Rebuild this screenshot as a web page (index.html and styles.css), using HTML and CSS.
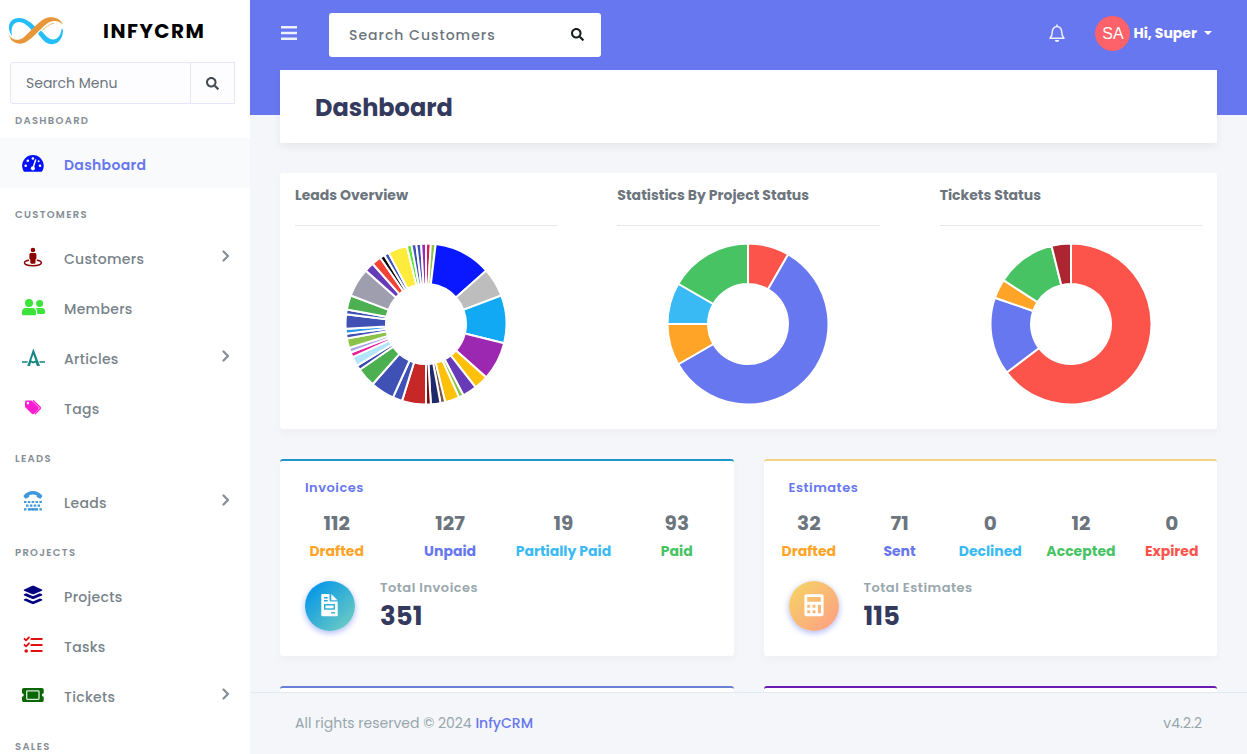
FILE: index.html
```html
<!DOCTYPE html>
<html lang="en">
<head>
<meta charset="utf-8">
<title>Dashboard | InfyCRM</title>
<link rel="stylesheet" href="styles.css">
</head>
<body>
<svg class="sprite" aria-hidden="true">
  <symbol id="i-search" viewBox="0 0 512 512"><path d="M505 442.7L405.3 343c-4.5-4.5-10.6-7-17-7H372c27.6-35.3 44-79.7 44-128C416 93.1 322.9 0 208 0S0 93.1 0 208s93.1 208 208 208c48.3 0 92.7-16.4 128-44v16.3c0 6.4 2.5 12.5 7 17l99.7 99.7c9.4 9.4 24.6 9.4 33.9 0l28.3-28.3c9.4-9.4 9.4-24.6.1-34zM208 336c-70.7 0-128-57.2-128-128 0-70.7 57.2-128 128-128 70.7 0 128 57.2 128 128 0 70.7-57.2 128-128 128z"/></symbol>
  <symbol id="i-chevron" viewBox="0 0 8 12"><path d="M1.500 1.500L6 6l-4.500 4.500" fill="none" stroke="currentColor" stroke-width="2.200" stroke-linecap="round" stroke-linejoin="round"/></symbol>
</svg>
<div class="app">
  <aside class="sidebar">
    <a class="brand" href="#">
      <svg class="brand-logo" viewBox="0 0 56 28" aria-hidden="true">
        <path d="M4 19C-2 11 1 1 11 1c7 0 12 4.500 17 9.500l-3.500 3.500C20 9 16 5 11 5 5 5 2.500 11 4 19z" fill="#23bdf7"/>
        <path d="M30 16.500l3-3c4 4 6.500 8.500 12 9 5 .3 8-5 8.500-10.500h1.300C55.800 20 51 27.200 44 27.200c-6.500 0-10.500-5.700-14-10.700z" fill="#23bdf7"/>
        <path d="M.8 17.500C4 24 11 24 15.500 20.500 22 15 30 5 36 2c7-3.500 16-1.500 18.800 5.500C50 2.500 43 3.500 39 6.500 32 12 25 21 18 25 11 29 2.500 25.500.8 17.500z" fill="#e8963a"/>
        <path d="M34 13.500C38 10 42 6.700 46 6" fill="none" stroke="#f3bd7e" stroke-width="1"/>
      </svg>
      <span class="brand-name">INFYCRM</span>
    </a>
    <form class="menu-search">
      <input class="menu-search-input" type="text" placeholder="Search Menu" aria-label="Search Menu">
      <button class="menu-search-btn" type="button" aria-label="Search"><svg class="ico-sm" aria-hidden="true"><use href="#i-search"/></svg></button>
    </form>
    <nav class="menu">
      <h6 class="menu-header menu-header-first">Dashboard</h6>
      <a class="menu-item active" href="#">
        <svg class="menu-icon c-blue" viewBox="0 0 24 24" aria-hidden="true"><path d="M1.100 14.800a10.800 10.800 0 0 1 21.600 0c0 1.900-.5 3.700-1.400 5.300-.2.400-.6.600-1 .600H3.500c-.4 0-.8-.2-1-.6a10.600 10.600 0 0 1-1.400-5.300z"/><g fill="#fff"><circle cx="4.700" cy="14.800" r="1.300"/><circle cx="6.800" cy="9.800" r="1.300"/><circle cx="11.900" cy="7.500" r="1.300"/><circle cx="19" cy="14.800" r="1.300"/><circle cx="17.600" cy="10.200" r="1"/><circle cx="11.900" cy="17.300" r="2.100"/></g><path d="M12 17l2.600-8" stroke="#fff" stroke-width="1.500" stroke-linecap="round"/></svg>
        <span class="menu-label">Dashboard</span>
      </a>
      <h6 class="menu-header">Customers</h6>
      <a class="menu-item" href="#">
        <svg class="menu-icon c-maroon" viewBox="0 0 24 24" aria-hidden="true"><circle cx="11.900" cy="5" r="2.300"/><path d="M10 8h3.800c1 0 1.600.7 1.600 1.600v3.600c0 .6-.4 1-.9 1.200v3.200c0 .7-.5 1.100-1.100 1.100h-3c-.6 0-1.100-.4-1.100-1.100v-3.200c-.5-.2-.9-.6-.9-1.200V9.600C8.400 8.700 9 8 10 8z"/><path d="M7.500 15.200c-2.500.5-4.100 1.400-4.100 2.500 0 1.700 3.800 3 8.500 3s8.500-1.300 8.500-3c0-1.100-1.600-2-4.100-2.500" fill="none" stroke="currentColor" stroke-width="1.400" stroke-linecap="round"/></svg>
        <span class="menu-label">Customers</span><svg class="chevron" aria-hidden="true"><use href="#i-chevron"/></svg>
      </a>
      <a class="menu-item" href="#">
        <svg class="menu-icon c-lime" viewBox="0 0 24 24" aria-hidden="true"><circle cx="8" cy="8" r="4"/><path d="M4.800 13h6.400c2.300 0 3.800 1.600 3.800 3.800v1.900c0 .9-.7 1.600-1.600 1.600H2.600c-.9 0-1.600-.7-1.600-1.600v-1.900C1 14.600 2.500 13 4.800 13z"/><circle cx="18.600" cy="8.400" r="3.500"/><path d="M15.500 13H21c1.900 0 3 1.400 3 3.300v1.300c0 .8-.6 1.300-1.300 1.300h-6.500v-2.100c0-1.500-.5-2.600-1.600-3.500z"/></svg>
        <span class="menu-label">Members</span>
      </a>
      <a class="menu-item" href="#">
        <svg class="menu-icon c-teal" viewBox="0 0 24 24" aria-hidden="true"><path d="M12.300 3.600L19 21h-3l-1.400-3.400-2.300.9-2.300-.9L8.900 21H6.300zM12.300 9.600l-2.100 6 2.100.9 2.200-.9z" fill-rule="evenodd"/><path d="M1 16.200h6l-.6 1.500H1zM18.200 16.200H24v1.500h-5.300z"/></svg>
        <span class="menu-label">Articles</span><svg class="chevron" aria-hidden="true"><use href="#i-chevron"/></svg>
      </a>
      <a class="menu-item" href="#">
        <svg class="menu-icon c-pink" viewBox="0 0 24 24" aria-hidden="true"><path fill-rule="evenodd" d="M4 7v4.300c0 .4.200.8.500 1.100l6.300 6.300c.6.6 1.500.6 2.100 0l4.500-4.500c.6-.6.6-1.500 0-2.100L11.100 5.900c-.3-.3-.7-.4-1.100-.4H5.500C4.700 5.500 4 6.200 4 7zm2.900 2.400a1.300 1.300 0 1 1 0-2.600 1.300 1.300 0 0 1 0 2.600z"/><path d="M12.500 5.700l6.400 6.400c.6.6.6 1.400 0 2l-4.700 4.700" fill="none" stroke="currentColor" stroke-width="1.400" stroke-linecap="round"/></svg>
        <span class="menu-label">Tags</span>
      </a>
      <h6 class="menu-header">Leads</h6>
      <a class="menu-item" href="#">
        <svg class="menu-icon c-sky" viewBox="0 0 24 24" aria-hidden="true"><path d="M2.700 6.600C5 3.500 8.300 2 11.900 2s6.900 1.500 9.200 4.600c.3.400.2.900-.1 1.200l-1.200 1.500c-.3.400-.8.400-1.200.2l-2.500-1.300c-.4-.2-.6-.6-.5-1l.1-1a11 11 0 0 0-7.600 0l.1 1c.1.400-.1.800-.5 1L5.200 9.500c-.4.200-.9.200-1.200-.2L2.800 7.800c-.4-.3-.4-.8-.1-1.200z"/><path d="M3 13h18M5 16.700h14M3 20.300h18" fill="none" stroke="currentColor" stroke-width="2.200" stroke-dasharray="2.500 1.350"/><path d="M7.500 20.300h9" stroke="currentColor" stroke-width="2.200"/></svg>
        <span class="menu-label">Leads</span><svg class="chevron" aria-hidden="true"><use href="#i-chevron"/></svg>
      </a>
      <h6 class="menu-header">Projects</h6>
      <a class="menu-item" href="#">
        <svg class="menu-icon c-navy" viewBox="0 0 24 24" aria-hidden="true"><path d="M11.400 2.800c.4-.2.900-.2 1.300 0l8.200 3.600c.6.300.6 1 0 1.300l-8.200 3.600c-.4.200-.9.200-1.300 0L3.200 7.700c-.6-.3-.6-1 0-1.300z"/><path d="M3.200 11.200l2-.9 5.700 2.500c.7.300 1.500.3 2.200 0l5.700-2.500 2.100.9c.6.300.6.900 0 1.200l-8.200 3.600c-.4.200-.9.200-1.300 0l-8.200-3.600c-.6-.3-.6-.9 0-1.200z"/><path d="M3.200 16.300l2-.9 5.700 2.500c.7.300 1.500.3 2.200 0l5.700-2.500 2.100.9c.6.300.6.900 0 1.200l-8.200 3.600c-.4.200-.9.200-1.300 0l-8.200-3.600c-.6-.3-.6-.9 0-1.200z"/></svg>
        <span class="menu-label">Projects</span>
      </a>
      <a class="menu-item" href="#">
        <svg class="menu-icon c-red" viewBox="0 0 24 24" aria-hidden="true"><g fill="none" stroke="currentColor" stroke-linecap="round" stroke-linejoin="round"><path d="M10.500 6h10.200M10.500 12h10.200M10.500 18h10.200" stroke-width="2.200"/><path d="M3.500 5.800l1.500 1.500 3-3M3.500 11.800L5 13.300l3-3" stroke-width="1.800"/></g><circle cx="5.200" cy="18" r="1.800"/></svg>
        <span class="menu-label">Tasks</span>
      </a>
      <a class="menu-item" href="#">
        <svg class="menu-icon c-green" viewBox="0 0 24 24" aria-hidden="true"><path d="M2.800 5h18.100c1 0 1.800.8 1.800 1.800v3.400a1.800 1.800 0 0 0 0 3.600v3.400c0 1-.8 1.800-1.800 1.800H2.800c-1 0-1.800-.8-1.800-1.800v-3.400a1.800 1.800 0 0 0 0-3.600V6.800C1 5.800 1.800 5 2.800 5z"/><rect x="5.700" y="7.800" width="12.300" height="8.500" rx=".8" fill="none" stroke="#dcecdc" stroke-width="1.300"/></svg>
        <span class="menu-label">Tickets</span><svg class="chevron" aria-hidden="true"><use href="#i-chevron"/></svg>
      </a>
      <h6 class="menu-header">Sales</h6>
    </nav>
  </aside>

  <div class="main">
    <div class="scroll">
      <header class="topbar">
        <button class="icon-btn" type="button" aria-label="Toggle menu"><svg class="burger" viewBox="0 0 16 14" aria-hidden="true"><path d="M0 0h16v2.600H0zM0 5.700h16v2.600H0zM0 11.400h16V14H0z"/></svg></button>
        <form class="top-search">
          <input class="top-search-input" type="text" placeholder="Search Customers" aria-label="Search Customers">
          <button class="icon-btn dark" type="button" aria-label="Search"><svg class="ico-sm" aria-hidden="true"><use href="#i-search"/></svg></button>
        </form>
        <div class="user-area">
          <button class="icon-btn" type="button" aria-label="Notifications"><svg class="bell" viewBox="0 0 16 18" aria-hidden="true"><g fill="none" stroke="currentColor" stroke-width="1.500" stroke-linejoin="round" stroke-linecap="round"><path d="M8 1v1M1 14.300h14c-1.400-1.500-2.300-3-2.300-6.600C12.700 4.600 10.600 2.400 8 2.400S3.300 4.600 3.300 7.700c0 3.600-.9 5.100-2.300 6.600z"/></g><path d="M5.800 16h4.400a2.200 2 0 0 1-4.400 0z"/></svg></button>
          <button class="user-btn" type="button"><span class="avatar">SA</span><span>Hi, Super</span><span class="caret"></span></button>
        </div>
      </header>

      <main class="content">
        <div class="page-title"><h1 class="page-heading">Dashboard</h1></div>

        <section class="card charts">
          <div class="chart-col"><h2 class="chart-title">Leads Overview</h2><svg class="donut" data-chart="leads" viewBox="0 0 162 162" role="img" aria-label="Leads Overview"></svg></div>
          <div class="chart-col"><h2 class="chart-title">Statistics By Project Status</h2><svg class="donut" data-chart="projects" viewBox="0 0 162 162" role="img" aria-label="Statistics By Project Status"></svg></div>
          <div class="chart-col"><h2 class="chart-title">Tickets Status</h2><svg class="donut" data-chart="tickets" viewBox="0 0 162 162" role="img" aria-label="Tickets Status"></svg></div>
        </section>

        <div class="stats">
          <section class="card stat top-teal">
            <h2 class="stat-title"><a href="#">Invoices</a></h2>
            <div class="counts">
              <div class="count"><b>112</b><span class="t-orange">Drafted</span></div>
              <div class="count"><b>127</b><span class="t-indigo">Unpaid</span></div>
              <div class="count"><b>19</b><span class="t-sky">Partially Paid</span></div>
              <div class="count"><b>93</b><span class="t-green">Paid</span></div>
            </div>
            <div class="total">
              <div class="disc disc-blue"><svg class="disc-icon" viewBox="0 0 22 24" aria-hidden="true"><path fill-rule="evenodd" d="M3.500 1h7v6.200c0 .7.500 1.200 1.200 1.200h7V22c0 .8-.4 1.200-1.200 1.200h-14c-.8 0-1.200-.4-1.200-1.200V2.200C2.300 1.400 2.700 1 3.500 1zM5 4v1.400h3.700V4zM5 7v1.400h3.700V7zM5 11v5.700h11V11zM6.500 12.500h8v2.700h-8zM12 19v1.400h4V19z"/><path d="M12.300 1l6.200 6.200h-6.200z"/></svg></div>
              <div><p class="total-label">Total Invoices</p><p class="total-value">351</p></div>
            </div>
          </section>
          <section class="card stat top-yellow">
            <h2 class="stat-title"><a href="#">Estimates</a></h2>
            <div class="counts">
              <div class="count"><b>32</b><span class="t-orange">Drafted</span></div>
              <div class="count"><b>71</b><span class="t-indigo">Sent</span></div>
              <div class="count"><b>0</b><span class="t-sky">Declined</span></div>
              <div class="count"><b>12</b><span class="t-green">Accepted</span></div>
              <div class="count"><b>0</b><span class="t-red">Expired</span></div>
            </div>
            <div class="total">
              <div class="disc disc-orange"><svg class="disc-icon" viewBox="0 0 22 24" aria-hidden="true"><path fill-rule="evenodd" d="M3.400 1.200h15.200c1.200 0 2 .8 2 2v18c0 1.200-.8 2-2 2H3.400c-1.200 0-2-.8-2-2v-18c0-1.200.8-2 2-2zM4.200 4v4.800h13.600V4zM4.200 11.700v3h3v-3zM9.500 11.700v3h3v-3zM4.200 17.300v3h3v-3zM9.500 17.300v3h3v-3zM14.900 11.700v8.600h3v-8.600z"/></svg></div>
              <div><p class="total-label">Total Estimates</p><p class="total-value">115</p></div>
            </div>
          </section>
          <section class="card stat stat-empty top-indigo"></section>
          <section class="card stat stat-empty top-purple"></section>
        </div>
      </main>
    </div>
    <footer class="footer"><span>All rights reserved © 2024 <a href="#">InfyCRM</a></span><span>v4.2.2</span></footer>
  </div>
</div>
<script src="charts.js"></script>
</body>
</html>
```

FILE: styles.css
```css
* { box-sizing: border-box; }

body {
  margin: 0;
  font-family: Poppins, Inter, "Liberation Sans", sans-serif;
  font-size: 14px;
  line-height: 20px;
  color: #6c757d;
  background: #f4f6f9;
}

h1, h2, h6, p { margin: 0; }
a { color: #6777ef; text-decoration: none; }
button, input { font: inherit; }
svg { fill: currentColor; }
.sprite { position: absolute; width: 0; height: 0; }

.app { display: flex; height: 100vh; overflow: hidden; }

/* Sidebar */
.sidebar { flex: 0 0 250px; overflow: hidden; background: #fff; }
.brand { display: flex; align-items: center; gap: 39px; height: 62px; padding-left: 8px; color: #000; }
.brand-logo { width: 56px; height: 28px; }
.brand-name { font-size: 20px; font-weight: 700; letter-spacing: 1.5px; line-height: 30px; }

.menu-search { display: flex; height: 42px; padding: 0 15px 0 10px; }
.menu-search-input {
  flex: 1; min-width: 0; padding: 0 15px;
  border: 1px solid #e4e6fc; border-radius: 3px 0 0 3px; background: #fdfdff; color: #495057;
}
.menu-search-input::placeholder, .top-search-input::placeholder { color: #6c757d; opacity: 1; }
.menu-search-btn {
  display: flex; align-items: center; justify-content: center; width: 44px; padding: 0;
  border: 1px solid #e4e6fc; border-left: 0; background: #fdfdff; color: #444a50;
}
.ico-sm { width: 13px; height: 13px; }

.menu-header {
  padding: 17px 15px 7px;
  font-size: 10px; font-weight: 600; line-height: 20px; letter-spacing: 1.3px;
  text-transform: uppercase; color: #868e96;
}
.menu-header-first { padding-top: 7px; }
.menu-item {
  display: flex; align-items: center; gap: 19px; height: 50px; padding: 0 20px 0 21px;
  font-weight: 500; letter-spacing: 0.3px; color: #78828a;
}
.menu-item.active { background: #f8fafb; color: #6777ef; font-weight: 600; }
.menu-icon { flex: none; width: 24px; height: 24px; }
.menu-label { flex: 1; padding-top: 4px; }
.chevron { width: 8px; height: 12px; margin-bottom: 2px; color: #868e96; }

.c-blue { color: #0010fa; }
.c-maroon { color: #8b0000; }
.c-lime { color: #3be33b; }
.c-teal { color: #148484; }
.c-pink { color: #fb1bd0; }
.c-sky { color: #3e98dc; }
.c-navy { color: #000080; }
.c-red { color: #e01010; }
.c-green { color: #0b6606; }

/* Main column */
.main { display: flex; flex: 1; flex-direction: column; min-width: 0; }
.scroll {
  flex: 1; min-height: 0; overflow: hidden;
  background: linear-gradient(#6777ef, #6777ef) 0 0 / 100% 115px no-repeat;
}

.topbar { display: flex; align-items: flex-start; height: 70px; padding: 13px 35px 0 31px; }
.icon-btn { display: flex; align-items: center; height: 40px; padding: 0; border: 0; background: none; color: #eef0fd; }
.icon-btn.dark { color: #191d21; }
.burger { width: 16px; height: 14px; }
.top-search {
  display: flex; align-items: center; width: 272px; height: 44px; margin-left: 32px; padding: 0 17px 2px 20px;
  border-radius: 3px; background: #fff;
}
.top-search-input {
  flex: 1; min-width: 0; padding: 2px 0 0; border: 0; outline: 0; background: none;
  font-weight: 500; letter-spacing: 1px;
}
.user-area { display: flex; align-items: center; gap: 30px; margin-left: auto; }
.bell { width: 16px; height: 18px; }
.user-btn {
  display: flex; align-items: center; gap: 3px; height: 40px; padding: 0; border: 0; background: none;
  color: #fff; font-weight: 700; line-height: 18px;
}
.avatar {
  width: 35px; height: 35px; border-radius: 50%; background: #fd6169;
  font-family: "Liberation Sans", sans-serif; font-size: 16px; font-weight: 400; line-height: 35px; text-align: center;
}
.caret { margin-left: 4px; border: 4px solid transparent; border-top-color: #fff; border-bottom: 0; }

.content { padding: 0 30px; }
.page-title {
  display: flex; align-items: center; height: 73px; padding: 2px 35px 0; margin-bottom: 30px;
  background: #fff; box-shadow: 0 4px 8px rgba(0, 0, 0, 0.06);
}
.page-heading { font-size: 24px; font-weight: 700; line-height: 30px; color: #34395e; }

.card { border-radius: 3px; background: #fff; box-shadow: 0 4px 8px rgba(0, 0, 0, 0.03); }

.charts { display: grid; grid-template-columns: repeat(3, 1fr); gap: 60px; padding: 12px 15px 24px; margin-bottom: 30px; }
.chart-title {
  padding-bottom: 20px; margin-bottom: 17px; border-bottom: 1px solid #e6e7e8;
  font-size: 14px; font-weight: 700; line-height: 20px;
}
.donut { display: block; width: 162px; height: 162px; margin: 0 auto; }

.stats { display: grid; grid-template-columns: 1fr 1fr; gap: 30px; }
.stat { padding: 17px 0 25px; border-top: 2px solid; }
.stat-empty { min-height: 197px; }
.top-teal { border-top-color: #2295c8; }
.top-yellow { border-top-color: #f3d285; }
.top-indigo { border-top-color: #6a7fd6; }
.top-purple { border-top-color: #6a1bb0; }
.stat-title { padding: 0 25px; font-size: 13px; font-weight: 600; line-height: 20px; letter-spacing: 0.5px; }
.counts { display: flex; margin: 10px 0 20px; text-align: center; }
.count { display: flex; flex: 1 1 0; flex-direction: column; gap: 3px; min-width: 0; font-weight: 700; white-space: nowrap; }
.count b { font-size: 20px; font-weight: 700; line-height: 30px; }
.t-orange { color: #ffa426; }
.t-indigo { color: #6777ef; }
.t-sky { color: #3abaf4; }
.t-green { color: #47c363; }
.t-red { color: #fc544b; }

.total { display: flex; align-items: center; gap: 25px; height: 50px; padding: 0 25px; }
.disc {
  display: flex; align-items: center; justify-content: center; width: 50px; height: 50px;
  border-radius: 50%; color: #fff; box-shadow: 0 2px 6px #acb5f6;
}
.disc-blue { background: linear-gradient(135deg, #0396e8 10%, #72cec0 95%); }
.disc-orange { background: linear-gradient(135deg, #f6d365 5%, #fd9f84 95%); }
.disc-icon { width: 22px; height: 24px; margin-bottom: 2px; }
.total-label { font-size: 13px; font-weight: 600; letter-spacing: 0.5px; color: #98a6ad; }
.total-value { font-size: 26px; font-weight: 700; line-height: 36px; color: #34395e; }

.footer {
  display: flex; align-items: center; justify-content: space-between;
  height: 62px; padding: 0 45px 2px; border-top: 1px solid #e3eaef; color: #98a6ad;
}
.footer a { font-weight: 500; }
```

FILE: charts.js
```js
const charts = {
  leads: [
    [1, '#d81b52'], [1, '#8bc34a'], [12, '#0a18ff'], [6, '#bdbdbd'], [10, '#12a9f4'],
    [8, '#9c27b0'], [3, '#ffc107'], [3, '#673ab7'], [1, '#8bc34a'], [3, '#ffc107'],
    [1, '#795548'], [2, '#1f2a6b'], [1, '#7a0c12'], [5, '#c62828'], [2, '#3f51b5'],
    [5, '#3f51b5'], [4, '#4caf50'], [1, '#3949ab'], [2, '#b3e5fc'], [1, '#e91e9b'],
    [1, '#a9a4ec'], [2, '#8bc34a'], [1, '#3f51b5'], [1, '#2f97e8'], [3, '#3f51b5'],
    [1, '#3f51b5'], [3, '#4caf50'], [6, '#9e9eae'], [2, '#673ab7'], [2, '#f44336'],
    [1, '#0b0b0b'], [1, '#3f51b5'], [4, '#ffeb3b'], [1, '#5be02e'], [1, '#3f51b5'],
    [1, '#3f51b5'], [1, '#9c27b0']
  ],
  projects: [[1, '#fc544b'], [7, '#6777ef'], [1, '#ffa426'], [1, '#3abaf4'], [2, '#47c363']],
  tickets: [[233, '#fc544b'], [56, '#6777ef'], [14, '#ffa426'], [43, '#47c363'], [14, '#ad2530']]
};

const CENTER = 81;
const OUTER = 80.5;
const INNER = 40;

function point(radius, turn) {
  const angle = turn * 2 * Math.PI;
  return (CENTER + radius * Math.sin(angle)).toFixed(2) + ' ' + (CENTER - radius * Math.cos(angle)).toFixed(2);
}

document.querySelectorAll('.donut').forEach(function (svg) {
  const slices = charts[svg.dataset.chart];
  const sum = slices.reduce((total, slice) => total + slice[0], 0);
  let start = 0;
  slices.forEach(function ([value, color]) {
    const end = start + value / sum;
    const large = end - start > 0.5 ? 1 : 0;
    const path = document.createElementNS('http://www.w3.org/2000/svg', 'path');
    path.setAttribute('d',
      'M' + point(OUTER, start) +
      'A' + OUTER + ' ' + OUTER + ' 0 ' + large + ' 1 ' + point(OUTER, end) +
      'L' + point(INNER, end) +
      'A' + INNER + ' ' + INNER + ' 0 ' + large + ' 0 ' + point(INNER, start) + 'Z');
    path.setAttribute('fill', color);
    path.setAttribute('stroke', '#fff');
    path.setAttribute('stroke-width', '2');
    svg.appendChild(path);
    start = end;
  });
});
```
